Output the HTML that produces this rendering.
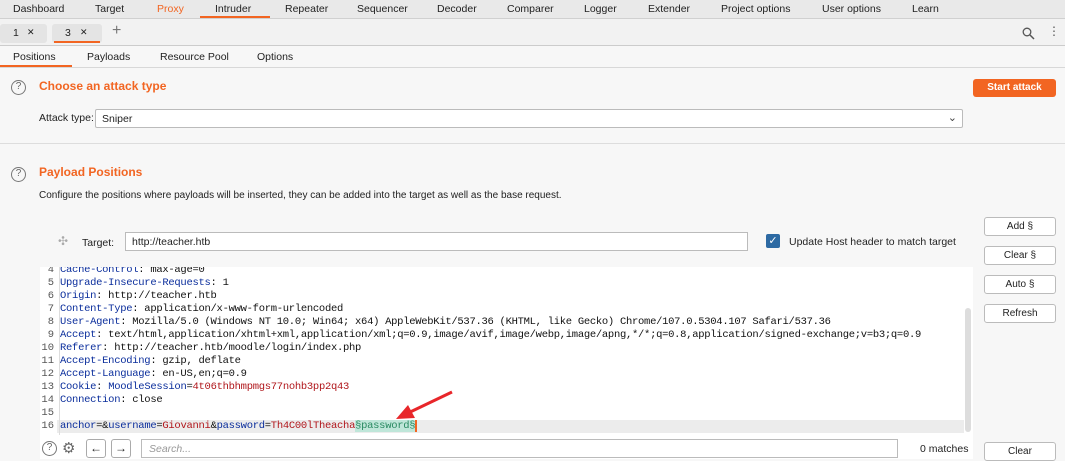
<!DOCTYPE html><html><head><style>
*{margin:0;padding:0;box-sizing:border-box}
body{width:1065px;height:460px;overflow:hidden;background:#f7f7f7;font-family:"Liberation Sans",sans-serif;font-size:10.5px;color:#222;position:relative}
.a{position:absolute}
.menu{top:0;left:0;width:1065px;height:19px;background:#e9e9e9;border-bottom:1px solid #d0d0d0}
.menu span{position:absolute;top:3px}
.tabs2{top:19px;left:0;width:1065px;height:27px;background:#f2f2f2;border-bottom:1px solid #ccc}
.sub{top:46px;left:0;width:1065px;height:22px;background:#f7f7f7;border-bottom:1px solid #d8d8d8}
.or{color:#f26522;font-weight:bold;font-size:12px}
.btn{background:#fff;border:1px solid #bbb;border-radius:3px;text-align:center;font-size:10px;line-height:17px;width:72px;height:19px}
.code{font-family:"Liberation Mono",monospace;font-size:10.5px;letter-spacing:-0.28px;line-height:13px;white-space:pre;color:#111}
.k{color:#0b2e9c}.v{color:#b0161b}.n{color:#555;display:inline-block;width:19px;text-align:right;margin-right:6px;letter-spacing:0}
.q{position:absolute;width:15px;height:15px;border:1.3px solid #777;border-radius:50%;text-align:center;font-size:10px;line-height:12px;color:#666}
</style></head><body>
<div class="a menu">
<span style="left:13px">Dashboard</span><span style="left:95px">Target</span><span style="left:157px;color:#f26522">Proxy</span><span style="left:215px">Intruder</span><span style="left:285px">Repeater</span><span style="left:357px">Sequencer</span><span style="left:437px">Decoder</span><span style="left:507px">Comparer</span><span style="left:584px">Logger</span><span style="left:648px">Extender</span><span style="left:721px">Project options</span><span style="left:822px">User options</span><span style="left:912px">Learn</span>
<div class="a" style="left:200px;top:16px;width:70px;height:2px;background:#f26522"></div>
</div>
<div class="a tabs2">
<div class="a" style="left:0;top:5px;width:47px;height:19px;background:#e4e4e4;border-radius:3px"><span class="a" style="left:13px;top:3px">1</span><span class="a" style="left:27px;top:3px;font-size:9px">✕</span></div>
<div class="a" style="left:52px;top:5px;width:50px;height:19px;background:#e4e4e4;border-radius:3px"><span class="a" style="left:13px;top:3px">3</span><span class="a" style="left:28px;top:3px;font-size:9px">✕</span><div class="a" style="left:2px;top:17px;width:46px;height:2px;background:#f26522"></div></div>
<span class="a" style="left:112px;top:3px;font-size:16px;color:#777">+</span>
<svg class="a" style="left:1022px;top:8px" width="13" height="13"><circle cx="5" cy="5" r="3.8" fill="none" stroke="#555" stroke-width="1.3"/><line x1="8" y1="8" x2="12" y2="12" stroke="#555" stroke-width="1.5"/></svg>
<span class="a" style="left:1048px;top:5px;font-size:12px;color:#555">⋮</span>
</div>
<div class="a sub">
<span class="a" style="left:13px;top:5px">Positions</span><span class="a" style="left:87px;top:5px">Payloads</span><span class="a" style="left:160px;top:5px">Resource Pool</span><span class="a" style="left:257px;top:5px">Options</span>
<div class="a" style="left:0;top:19px;width:72px;height:2px;background:#f26522"></div>
</div>
<div class="q" style="left:11px;top:80px">?</div>
<div class="a or" style="left:39px;top:79px">Choose an attack type</div>
<div class="a" style="left:973px;top:79px;width:83px;height:18px;background:#f26522;color:#fff;border-radius:3px;text-align:center;line-height:18px;font-weight:bold;font-size:10px">Start attack</div>
<div class="a" style="left:39px;top:112px">Attack type:</div>
<div class="a" style="left:95px;top:109px;width:868px;height:19px;background:#fff;border:1px solid #bbb;border-radius:2px"><span class="a" style="left:6px;top:3px">Sniper</span><span class="a" style="right:5px;top:1px;font-size:11px;color:#444">⌄</span></div>
<div class="a" style="left:0;top:143px;width:1065px;height:1px;background:#ddd"></div>
<div class="q" style="left:11px;top:167px">?</div>
<div class="a or" style="left:39px;top:165px">Payload Positions</div>
<div class="a" style="left:39px;top:190px;font-size:10px">Configure the positions where payloads will be inserted, they can be added into the target as well as the base request.</div>
<div class="a" style="left:40px;top:217px;width:933px;height:242px;background:#fff"></div>
<div class="a" style="left:40px;top:217px;width:933px;height:50px;background:#f7f7f7"></div>
<span class="a" style="left:58px;top:234px;color:#aaa;font-size:12px">✣</span>
<div class="a" style="left:82px;top:237px">Target:</div>
<div class="a" style="left:125px;top:232px;width:623px;height:19px;background:#fff;border:1px solid #bbb"><span class="a" style="left:6px;top:3px">http://teacher.htb</span></div>
<div class="a" style="left:766px;top:234px;width:14px;height:14px;background:#2d6aa3;border-radius:2px;color:#fff;font-size:11px;text-align:center;line-height:14px">✓</div>
<div class="a" style="left:789px;top:236px">Update Host header to match target</div>
<div class="a" style="left:57px;top:420px;width:907px;height:13px;background:#ececec"></div>
<div class="a" style="left:965px;top:308px;width:6px;height:124px;background:#ddd;border-radius:3px"></div>
<div class="a" style="left:59px;top:267px;width:1px;height:168px;background:#ddd"></div>
<div class="a" style="left:40px;top:267px;width:925px;height:168px;overflow:hidden">
<div class="a code" style="left:-5px;top:-3px"><span class="n">4</span><span class="k">Cache-Control</span>: max-age=0
<span class="n">5</span><span class="k">Upgrade-Insecure-Requests</span>: 1
<span class="n">6</span><span class="k">Origin</span>: http://teacher.htb
<span class="n">7</span><span class="k">Content-Type</span>: application/x-www-form-urlencoded
<span class="n">8</span><span class="k">User-Agent</span>: Mozilla/5.0 (Windows NT 10.0; Win64; x64) AppleWebKit/537.36 (KHTML, like Gecko) Chrome/107.0.5304.107 Safari/537.36
<span class="n">9</span><span class="k">Accept</span>: text/html,application/xhtml+xml,application/xml;q=0.9,image/avif,image/webp,image/apng,*/*;q=0.8,application/signed-exchange;v=b3;q=0.9
<span class="n">10</span><span class="k">Referer</span>: http://teacher.htb/moodle/login/index.php
<span class="n">11</span><span class="k">Accept-Encoding</span>: gzip, deflate
<span class="n">12</span><span class="k">Accept-Language</span>: en-US,en;q=0.9
<span class="n">13</span><span class="k">Cookie</span>: <span class="k">MoodleSession</span>=<span class="v">4t06thbhmpmgs77nohb3pp2q43</span>
<span class="n">14</span><span class="k">Connection</span>: close
<span class="n">15</span>
<span class="n">16</span><span class="k">anchor</span>=&amp;<span class="k">username</span>=<span class="v">Giovanni</span>&amp;<span class="k">password</span>=<span class="v">Th4C00lTheacha</span><span style="background:#bfe6d9;color:#2a8a62">§password§</span><span style="border-left:2px solid #f26522"></span></div>
</div>
<svg class="a" style="left:390px;top:388px" width="65" height="35"><line x1="62" y1="4" x2="16" y2="26" stroke="#e8262a" stroke-width="3"/><polygon points="6,31 18,17 25,30" fill="#e8262a"/></svg>
<div class="q" style="left:42px;top:441px">?</div>
<span class="a" style="left:62px;top:439px;font-size:15px;color:#666">⚙</span>
<div class="a" style="left:86px;top:439px;width:20px;height:19px;border:1px solid #aaa;border-radius:3px;background:#fff;text-align:center;font-size:12px;line-height:16px">←</div>
<div class="a" style="left:111px;top:439px;width:20px;height:19px;border:1px solid #aaa;border-radius:3px;background:#fff;text-align:center;font-size:12px;line-height:16px">→</div>
<div class="a" style="left:141px;top:439px;width:757px;height:19px;border:1px solid #bbb;background:#fff"><span class="a" style="left:7px;top:3px;color:#999;font-style:italic">Search...</span></div>
<div class="a" style="left:920px;top:443px">0 matches</div>
<div class="a btn" style="left:984px;top:217px">Add §</div>
<div class="a btn" style="left:984px;top:246px">Clear §</div>
<div class="a btn" style="left:984px;top:275px">Auto §</div>
<div class="a btn" style="left:984px;top:304px">Refresh</div>
<div class="a btn" style="left:984px;top:442px">Clear</div>
</body></html>
